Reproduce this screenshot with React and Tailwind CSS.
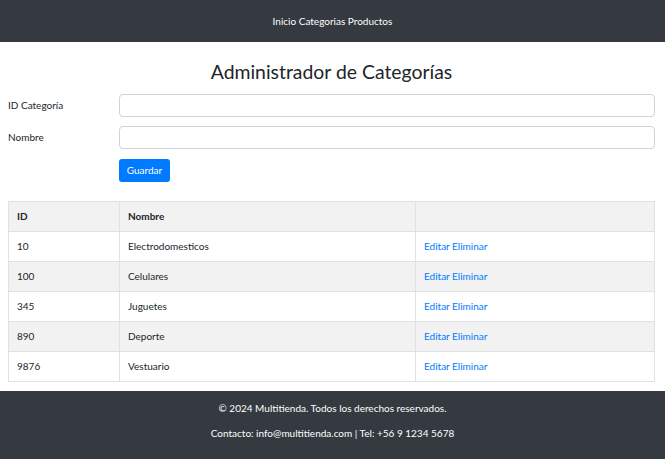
import React from "react";

const rows = [
  ["10", "Electrodomesticos"],
  ["100", "Celulares"],
  ["345", "Juguetes"],
  ["890", "Deporte"],
  ["9876", "Vestuario"],
];

export default function App() {
  return (
    <div className="min-h-[459px] bg-white text-[#212529] text-[10px]" style={{ fontFamily: 'Lato, "Open Sans", sans-serif' }}>
      <header className="bg-[#343a40] h-[42px] flex items-center justify-center text-white">
        <nav>Inicio Categorias Productos</nav>
      </header>
      <main className="pl-2 pr-[10px] pb-[9px]">
        <h1 className="text-center text-[19.4px] font-normal text-[#212529] pt-[17px] pb-[9px] leading-[26px]">Administrador de Categorías</h1>
        <div className="flex items-center h-[23px] mb-[9px]">
          <label className="w-[111px]">ID Categoría</label>
          <input className="flex-1 h-[23px] border border-[#ced4da] rounded-[4px]" />
        </div>
        <div className="flex items-center h-[23px] mb-[10px]">
          <label className="w-[111px]">Nombre</label>
          <input className="flex-1 h-[23px] border border-[#ced4da] rounded-[4px]" />
        </div>
        <div className="pl-[111px] mb-[19px]">
          <button className="bg-[#007bff] text-white rounded-[3px] h-[23px] w-[51px] flex items-center justify-center">Guardar</button>
        </div>
        <table className="w-full border-collapse border border-[#dee2e6]">
          <thead>
            <tr className="bg-[#f2f2f2] h-[30px]">
              <th className="border border-[#dee2e6] text-left font-bold px-2 w-[111px]">ID</th>
              <th className="border border-[#dee2e6] text-left font-bold px-2 w-[296px]">Nombre</th>
              <th className="border border-[#dee2e6]"></th>
            </tr>
          </thead>
          <tbody>
            {rows.map(([id, name], i) => (
              <tr key={id} className={`h-[30px] ${i % 2 === 1 ? "bg-[#f2f2f2]" : "bg-white"}`}>
                <td className="border border-[#dee2e6] px-2">{id}</td>
                <td className="border border-[#dee2e6] px-2">{name}</td>
                <td className="border border-[#dee2e6] px-2 text-[#007bff]">Editar Eliminar</td>
              </tr>
            ))}
          </tbody>
        </table>
      </main>
      <footer className="bg-[#343a40] text-white h-[68px] flex flex-col items-center pt-[10px] gap-[11px] leading-[14px]">
        <p>© 2024 Multitienda. Todos los derechos reservados.</p>
        <p>Contacto: info@multitienda.com | Tel: +56 9 1234 5678</p>
      </footer>
    </div>
  );
}
